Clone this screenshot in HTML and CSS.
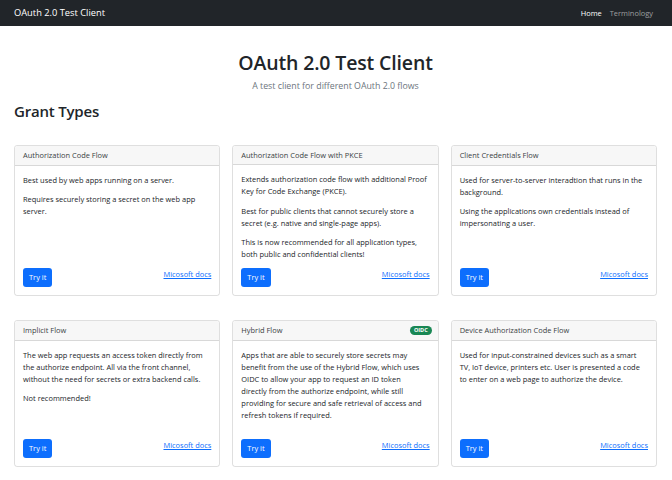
FILE: index.html
```html
<!DOCTYPE html>
<html lang="en">
<head>
<meta charset="utf-8">
<title>OAuth 2.0 Test Client</title>
<link rel="stylesheet" href="styles.css">
</head>
<body>
<nav class="navbar">
  <a class="brand" href="#">OAuth 2.0 Test Client</a>
  <ul class="nav">
    <li><a class="nav-link active" href="#">Home</a></li>
    <li><a class="nav-link" href="#">Terminology</a></li>
  </ul>
</nav>
<main class="container">
  <header class="hero">
    <h1 class="title">OAuth 2.0 Test Client</h1>
    <p class="lead">A test client for different OAuth 2.0 flows</p>
  </header>
  <h2 class="section-title">Grant Types</h2>
  <div class="grid">
    <div class="card">
      <div class="card-header">Authorization Code Flow</div>
      <div class="card-body">
        <p>Best used by web apps running on a server.</p>
        <p>Requires securely storing a secret on the web app server.</p>
        <div class="card-actions"><a class="btn" href="#">Try it</a><a class="docs" href="#">Micosoft docs</a></div>
      </div>
    </div>
    <div class="card">
      <div class="card-header">Authorization Code Flow with PKCE</div>
      <div class="card-body">
        <p>Extends authorization code flow with additional Proof Key for Code Exchange (PKCE).</p>
        <p>Best for public clients that cannot securely store a secret (e.g. native and single-page apps).</p>
        <p>This is now recommended for all application types, both public and confidential clients!</p>
        <div class="card-actions"><a class="btn" href="#">Try it</a><a class="docs" href="#">Micosoft docs</a></div>
      </div>
    </div>
    <div class="card">
      <div class="card-header">Client Credentials Flow</div>
      <div class="card-body">
        <p>Used for server-to-server interadtion that runs in the background.</p>
        <p>Using the applications own credentials instead of impersonating a user.</p>
        <div class="card-actions"><a class="btn" href="#">Try it</a><a class="docs" href="#">Micosoft docs</a></div>
      </div>
    </div>
    <div class="card">
      <div class="card-header">Implicit Flow</div>
      <div class="card-body">
        <p>The web app requests an access token directly from the authorize endpoint. All via the front channel, without the need for secrets or extra backend calls.</p>
        <p>Not recommended!</p>
        <div class="card-actions"><a class="btn" href="#">Try it</a><a class="docs" href="#">Micosoft docs</a></div>
      </div>
    </div>
    <div class="card">
      <div class="card-header"><span>Hybrid Flow</span><span class="badge">OIDC</span></div>
      <div class="card-body">
        <p>Apps that are able to securely store secrets may benefit from the use of the Hybrid Flow, which uses OIDC to allow your app to request an ID token<br>directly from the authorize endpoint, while still providing for secure and safe retrieval of access and refresh tokens if required.</p>
        <div class="card-actions"><a class="btn" href="#">Try it</a><a class="docs" href="#">Micosoft docs</a></div>
      </div>
    </div>
    <div class="card">
      <div class="card-header">Device Authorization Code Flow</div>
      <div class="card-body">
        <p>Used for input-constrained devices such as a smart TV, IoT device, printers etc. User is presented a code to enter on a web page to authorize the device.</p>
        <div class="card-actions"><a class="btn" href="#">Try it</a><a class="docs" href="#">Micosoft docs</a></div>
      </div>
    </div>
  </div>
</main>
</body>
</html>
```
FILE: styles.css
```css
* { box-sizing: border-box; }
html, body { margin: 0; padding: 0; }
body {
  font-family: "Open Sans", "Noto Sans", sans-serif;
  font-size: 7.45px;
  line-height: 12px;
  color: #212529;
  background: #fff;
}
a { text-decoration: none; }

.navbar {
  height: 26px;
  background: #212529;
  display: flex;
  align-items: center;
  justify-content: space-between;
  padding: 0 15px 0 14px;
}
.brand {
  color: #fff;
  font-size: 9.3px;
  line-height: 14px;
}
.nav {
  list-style: none;
  margin: 0;
  padding: 0;
  display: flex;
}
.nav-link {
  display: block;
  padding: 0 4px;
  color: rgba(255,255,255,.55);
  font-size: 7.45px;
}
.nav-link.active { color: #fff; }

.container { padding: 0 15px 0 14px; }

.hero {
  text-align: center;
  padding-top: 25px;
}
.title {
  margin: 0;
  font-size: 19.5px;
  line-height: 24px;
  font-weight: 600;
  letter-spacing: -0.15px;
}
.lead {
  margin: 5px 0 0;
  font-size: 8.8px;
  line-height: 13px;
  font-weight: 400;
  color: #6c757d;
}
.section-title {
  margin: 8.5px 0 0;
  font-size: 15px;
  line-height: 18px;
  font-weight: 600;
  letter-spacing: -0.2px;
}

.grid {
  margin-top: 25px;
  display: grid;
  grid-template-columns: repeat(3, 1fr);
  grid-template-rows: 151px 147px;
  column-gap: 12px;
  row-gap: 24px;
}
.card {
  display: flex;
  flex-direction: column;
  border: 1px solid rgba(0,0,0,.125);
  border-radius: 3px;
  overflow: hidden;
}
.card-header {
  display: flex;
  align-items: center;
  justify-content: space-between;
  height: 20px;
  padding: 0 8px;
  background: #f7f7f7;
  border-bottom: 1px solid rgba(0,0,0,.125);
  color: #3a3f44;
}
.badge {
  display: inline-block;
  margin-right: -2px;
  padding: 0 4px;
  height: 9px;
  line-height: 9px;
  font-size: 5.5px;
  font-weight: 700;
  color: #fff;
  background: #198754;
  border-radius: 5px;
}
.card-body {
  flex: 1;
  display: flex;
  flex-direction: column;
  padding: 8px 8px 8px;
}
.card-body p { margin: 0 0 7.5px; }
.card-actions {
  margin-top: auto;
  display: flex;
  justify-content: space-between;
  align-items: flex-start;
}
.btn {
  display: inline-flex;
  align-items: center;
  height: 19px;
  padding: 0 6px;
  border-radius: 3px;
  background: #0d6efd;
  color: #fff;
}
.docs {
  color: #0d6efd;
  text-decoration: underline;
}
```
